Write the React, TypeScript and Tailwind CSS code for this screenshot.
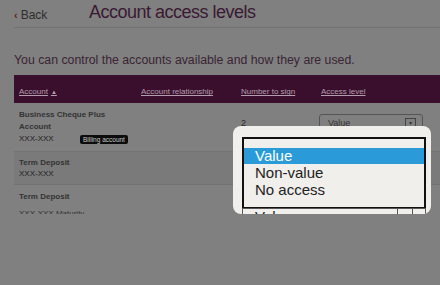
import React from "react";

export default function App() {
  return (
    <div
      className="relative w-[440px] h-[285px] overflow-hidden bg-[#808080]"
      style={{ fontFamily: '"Liberation Sans", Arial, sans-serif' }}
    >
      <div className="h-[214px] overflow-hidden pl-[14px]">
        {/* Top bar */}
        <div className="flex items-end h-[28px] border-b border-[#727272] pb-[5px]">
          <div className="flex items-center gap-[3px] w-[75px] text-[12px] text-[#2e2e2e] leading-none mb-[1px]">
            <span className="text-[#6a1c22] text-[11px] font-bold">‹</span>
            <span>Back</span>
          </div>
          <div className="text-[18px] leading-none tracking-[-0.5px] text-[#3a1a33] mb-[1px]">Account access levels</div>
        </div>
        {/* Description */}
        <div className="mt-[26px] text-[12.3px] leading-none text-[#3a2434]">
          You can control the accounts available and how they are used.
        </div>
        {/* Table header */}
        <div className="mt-[9px] h-[28px] bg-[#3a0f2d] grid grid-cols-[122px_100px_80px_1fr] items-center pl-[5px] pt-[6px] text-[8px] text-[#b39dac] underline">
          <div className="flex items-center gap-[3px]">
            <span>Account</span>
            <span className="no-underline text-[6px]">▲</span>
          </div>
          <div>Account relationship</div>
          <div>Number to sign</div>
          <div>Access level</div>
        </div>
        {/* Row 1 */}
        <div className="grid grid-cols-[122px_100px_80px_1fr] pl-[5px] h-[49px] border-b border-[#747474] text-[#2a2a2a]">
          <div className="pt-[6px] text-[8px] leading-[11.5px]">
            <div className="font-bold text-[#333]">Business Cheque Plus</div>
            <div className="font-bold text-[#333]">Account</div>
            <div className="flex items-center mt-[1px]">
              <span className="w-[61px] text-[#1e1e1e]">XXX-XXX</span>
              <span className="bg-[#0c0c0c] text-[#c8c8c8] text-[6.5px] leading-[9px] px-[3px] rounded-[2px]">Billing account</span>
            </div>
          </div>
          <div></div>
          <div className="pt-[14px] text-[9px] text-[#2a2a2a]">2</div>
          <div className="pt-[11px] ml-[-2px]">
            <div className="w-[104px] h-[19px] border border-[#555] rounded-[3px] flex items-center justify-between pl-[8px] pr-[6px] text-[9px] text-[#333]">
              <span>Value</span>
              <span className="w-[11px] h-[11px] border border-[#444] text-[6px] flex items-center justify-center">▾</span>
            </div>
          </div>
        </div>
        {/* Row 2 */}
        <div className="pl-[5px] h-[33px] bg-[#7a7a7a] border-b border-[#727272] pt-[5px] text-[8px] leading-[11px]">
          <div className="font-bold text-[#333]">Term Deposit</div>
          <div className="text-[#1e1e1e]">XXX-XXX</div>
        </div>
        {/* Row 3 */}
        <div className="pl-[5px] pt-[6px] text-[8px] leading-[11px]">
          <div className="font-bold text-[#333]">Term Deposit</div>
          <div className="text-[#333] mt-[6px]">XXX-XXX Maturity</div>
        </div>
      </div>

      {/* Popup magnified dropdown */}
      <div className="absolute left-[233px] top-[126px] w-[198px] h-[88px] rounded-[8px] bg-[#f1efec] overflow-hidden">
        <div className="absolute left-[9px] top-[11px] w-[184px] h-[72px] border-2 border-[#111] bg-[#f1efec]">
          <div className="h-[9px]"></div>
          <div className="h-[16px] bg-[#2a9bd8] text-white text-[15px] leading-[16px] pl-[11px]">Value</div>
          <div className="h-[17px] text-[#222] text-[15px] leading-[17px] pl-[11px]">Non-value</div>
          <div className="h-[17px] text-[#222] text-[15px] leading-[17px] pl-[11px]">No access</div>
        </div>
        <div className="absolute left-[9px] top-[82px] w-[184px] h-[20px] border border-[#555] bg-[#f1efec] flex">
          <span className="flex-1 pl-[12px] text-[15px] leading-[16px] text-[#222]">Value</span>
          <span className="w-[16px] border-l border-[#555] border-r"></span>
          <span className="w-[12px]"></span>
        </div>
      </div>
    </div>
  );
}
